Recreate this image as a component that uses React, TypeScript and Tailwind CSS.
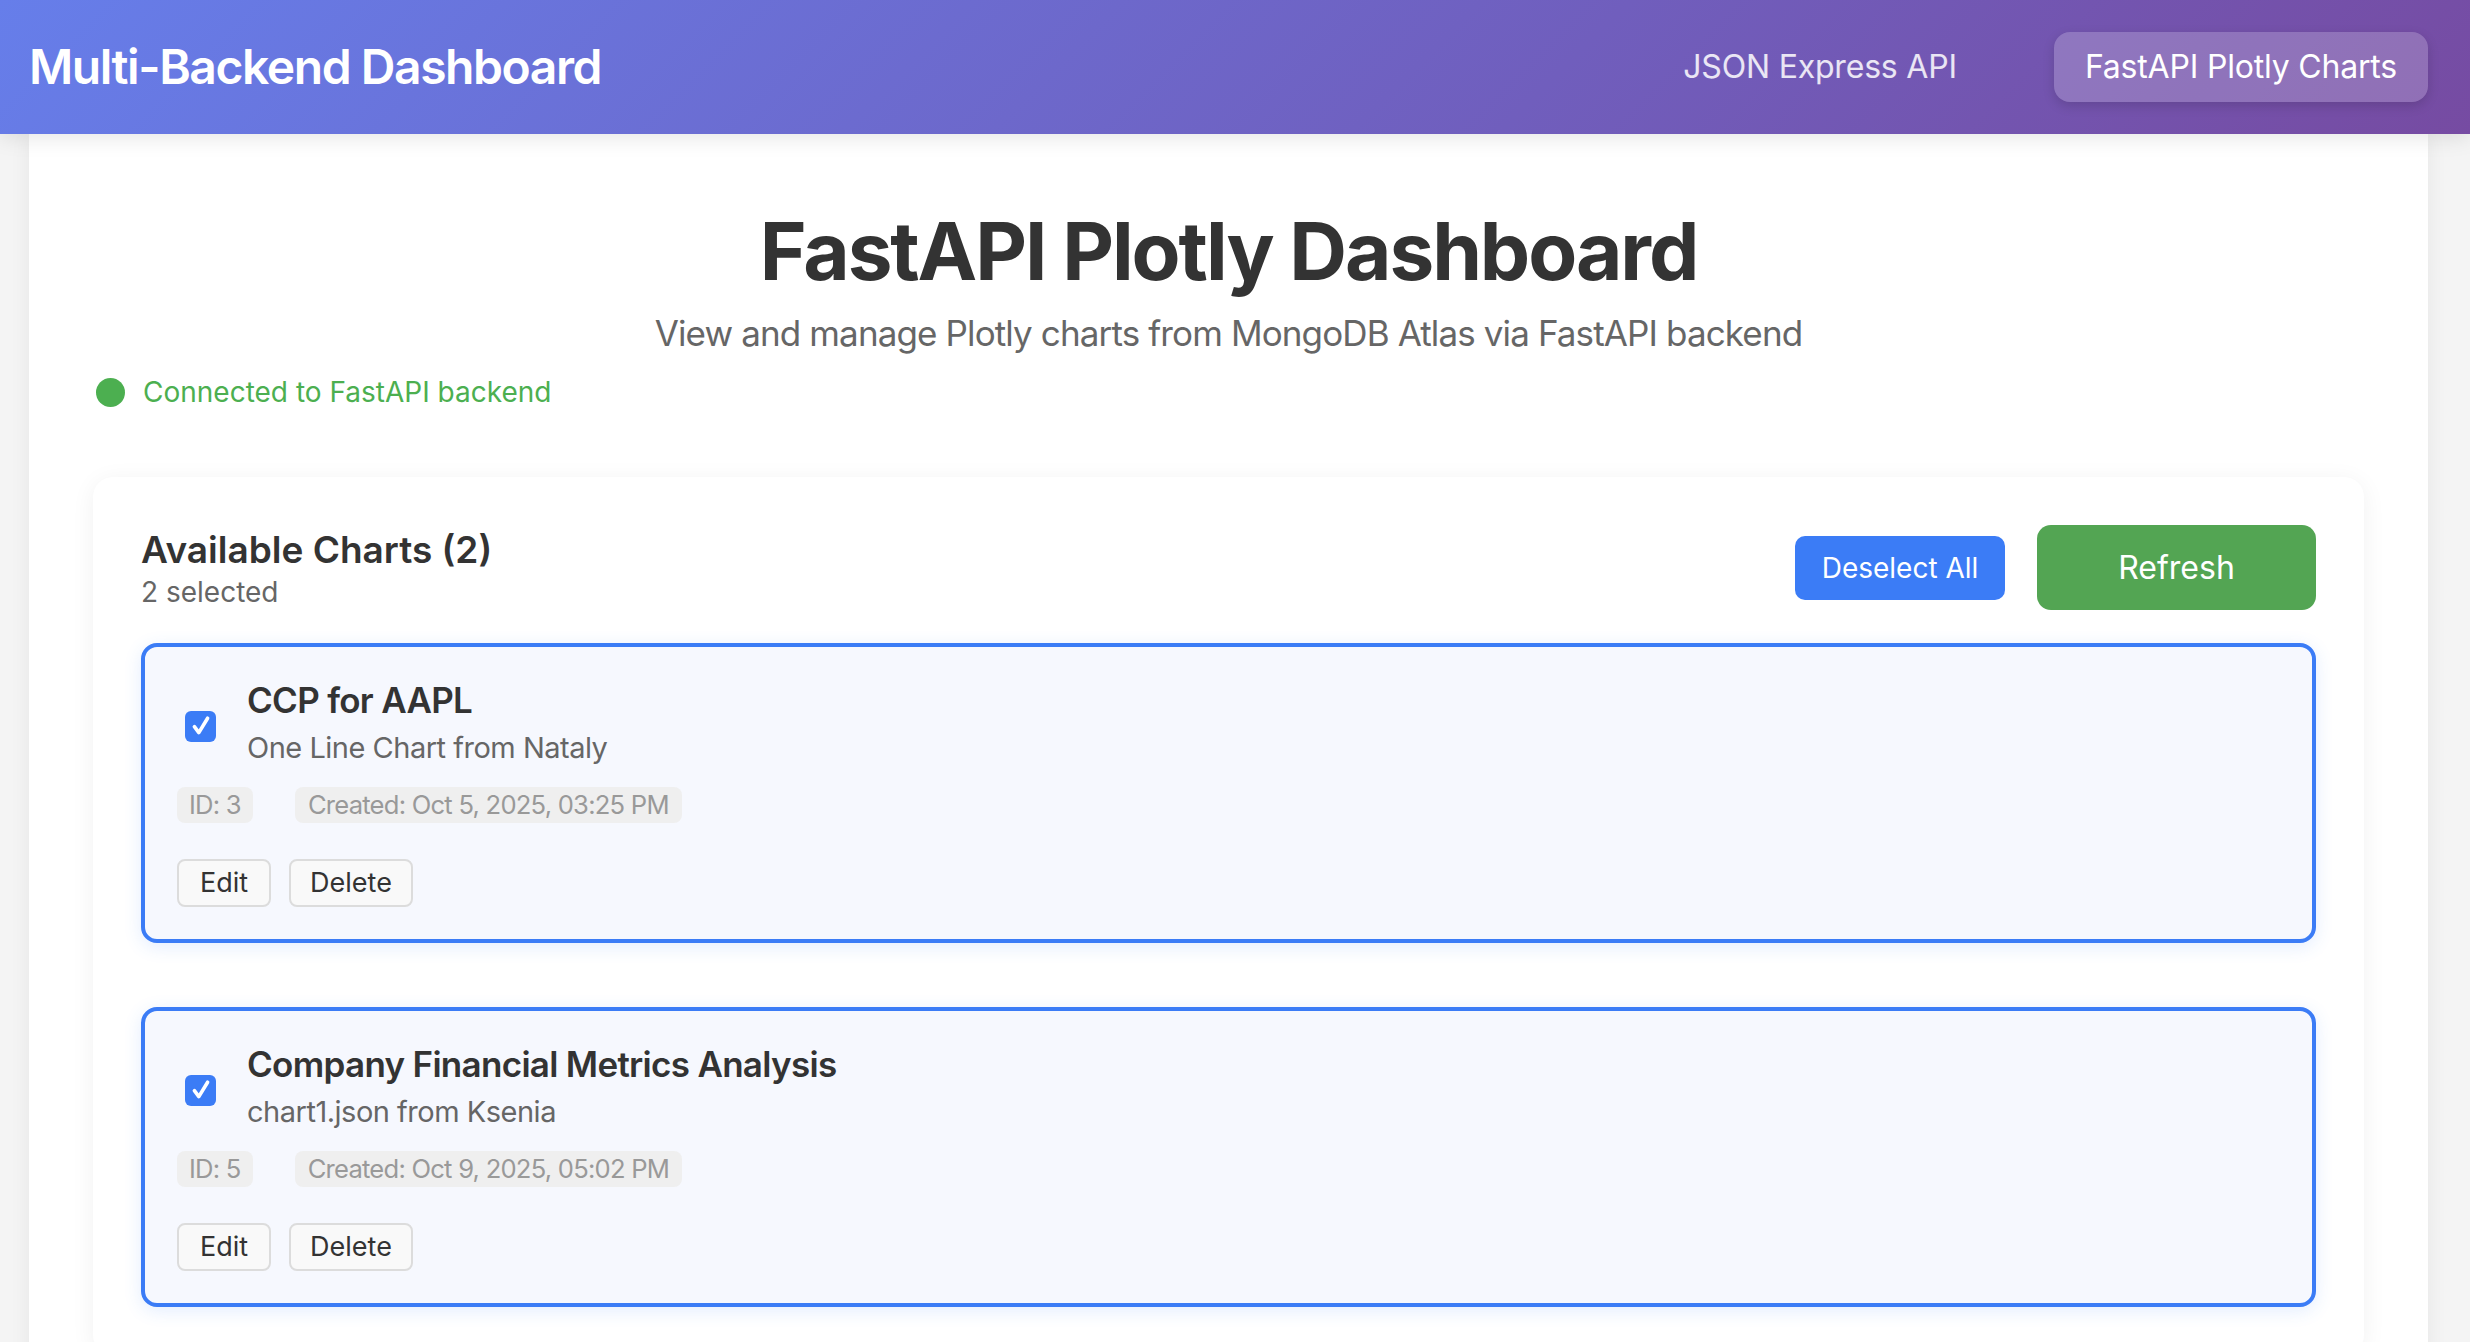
import React from 'react';

type Chart = { id: number; title: string; description: string; created: string };

const charts: Chart[] = [
  { id: 3, title: 'CCP for AAPL', description: 'One Line Chart from Nataly', created: 'Oct 5, 2025, 03:25 PM' },
  { id: 5, title: 'Company Financial Metrics Analysis', description: 'chart1.json from Ksenia', created: 'Oct 9, 2025, 05:02 PM' },
];

const CheckBox = () => (
  <div className="mt-[8px] ml-[8px] flex h-[31px] w-[31px] shrink-0 items-center justify-center rounded-[6px] bg-[#3b7cf6]">
    <svg width="24" height="24" viewBox="0 0 20 20" fill="none">
      <path d="M4.5 10.5 L8.2 15.5 L15.5 3.5" stroke="white" strokeWidth="3" strokeLinecap="round" strokeLinejoin="round" />
    </svg>
  </div>
);

const ChartCard = ({ chart }: { chart: Chart }) => (
  <div className="rounded-[16px] border-4 border-[#3b7cf6] bg-[#f6f8fe] p-[32px] shadow-[0_4px_18px_rgba(59,124,246,0.14)]">
    <div className="flex items-center gap-[31px]">
      <CheckBox />
      <div>
        <div className="text-[35px] font-semibold leading-[42px] tracking-[-0.02em] text-[#333]">{chart.title}</div>
        <div className="mt-[9px] text-[29px] leading-[35px] tracking-[-0.017em] text-[#666]">{chart.description}</div>
      </div>
    </div>
    <div className="mt-[22px] flex items-center gap-[42px] text-[25.6px] tracking-[-0.03em] text-[#999]">
      <span className="flex h-[36px] items-center rounded-[8px] bg-[#efefef] px-[12px]">ID: {chart.id}</span>
      <span className="flex h-[36px] items-center rounded-[8px] bg-[#efefef] px-[13px]">Created: {chart.created}</span>
    </div>
    <div className="mt-[36px] flex items-center gap-[18px]">
      <button className="flex h-[48px] w-[94px] items-center justify-center rounded-[8px] border-2 border-[#dcdcdc] bg-[#f9f9f9] text-[27px] text-[#333]">
        Edit
      </button>
      <button className="flex h-[48px] w-[124px] items-center justify-center rounded-[8px] border-2 border-[#dcdcdc] bg-[#f9f9f9] text-[27px] text-[#333]">
        Delete
      </button>
    </div>
  </div>
);

export default function App() {
  return (
    <div className="min-h-screen bg-[#f4f4f4] font-['Inter',sans-serif]">
      <header className="relative z-10 h-[134px] bg-[linear-gradient(135deg,#667eea_0%,#764ba2_100%)] shadow-[0_4px_20px_rgba(0,0,0,0.1)]">
        <div className="ml-[29px] flex h-full w-[2399px] items-center justify-between">
          <h1 className="text-[48px] font-semibold tracking-[-0.03em] text-white">Multi-Backend Dashboard</h1>
          <nav className="flex items-center gap-[65px] tracking-[-0.012em]">
            <button className="flex h-[70px] items-center rounded-[16px] px-[32px] text-[32px] text-white/85">
              JSON Express API
            </button>
            <button className="flex h-[70px] items-center rounded-[16px] bg-white/20 px-[31px] text-[32px] text-white shadow-[0_4px_12px_rgba(0,0,0,0.15)]">
              FastAPI Plotly Charts
            </button>
          </nav>
        </div>
      </header>

      <main className="ml-[29px] w-[2399px] bg-white px-[64px] pt-[69px] pb-[64px] shadow-[0_0_20px_rgba(0,0,0,0.06)]">
        <div className="text-center">
          <h2 className="text-[80px] font-bold leading-[96px] tracking-[-0.026em] text-[#333]">FastAPI Plotly Dashboard</h2>
          <p className="mt-[13px] text-[35px] leading-[42px] tracking-[-0.025em] text-[#666]">
            View and manage Plotly charts from MongoDB Atlas via FastAPI backend
          </p>
        </div>

        <div className="mt-[21px] flex items-center gap-[18px] pl-[3px]">
          <span className="h-[29px] w-[29px] rounded-full bg-[#4caf50]" />
          <span className="text-[28px] leading-[34px] text-[#4caf50]">Connected to FastAPI backend</span>
        </div>

        <section className="mt-[68px] rounded-[20px] bg-white p-[48px] shadow-[0_4px_24px_rgba(0,0,0,0.06)]">
          <div className="flex items-start justify-between">
            <div>
              <h3 className="text-[37px] font-semibold leading-[50px] text-[#333]">Available Charts (2)</h3>
              <p className="text-[28px] leading-[34px] text-[#666]">2 selected</p>
            </div>
            <div className="flex items-center gap-[32px]">
              <button className="flex h-[64px] w-[210px] items-center justify-center rounded-[10px] bg-[#3b7cf6] text-[28px] text-white">
                Deselect All
              </button>
              <button className="flex h-[85px] w-[279px] items-center justify-center rounded-[14px] bg-[#53a553] text-[32px] text-white">
                Refresh
              </button>
            </div>
          </div>

          <div className="mt-[33px] flex flex-col gap-[64px]">
            {charts.map(c => (
              <ChartCard key={c.id} chart={c} />
            ))}
          </div>
        </section>
      </main>
    </div>
  );
}
